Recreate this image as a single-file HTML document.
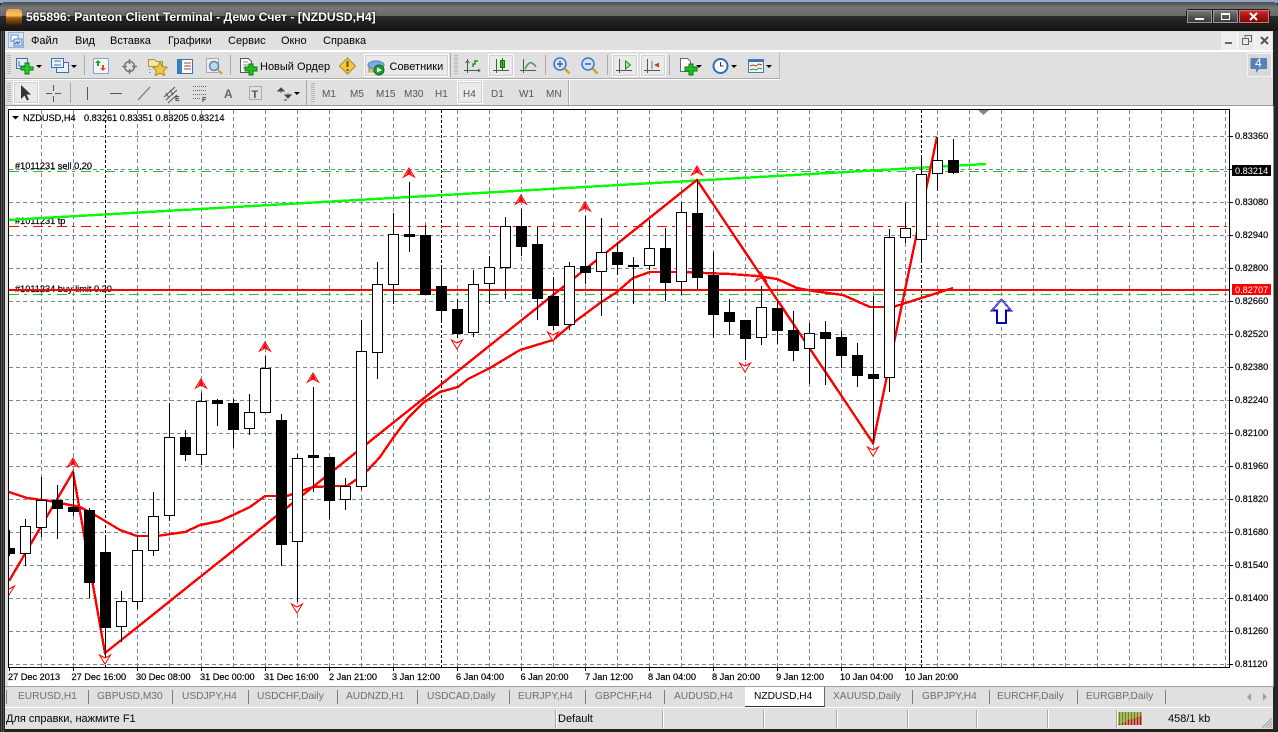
<!DOCTYPE html>
<html><head><meta charset="utf-8"><title>Panteon Client Terminal</title>
<style>
html,body{margin:0;padding:0;width:1278px;height:732px;overflow:hidden;background:#222}
body{position:relative;font-family:"Liberation Sans","Noto Sans CJK SC",sans-serif;font-size:11px;color:#000}
.a{position:absolute}
.t{position:absolute;white-space:nowrap;line-height:13px}
.sep{position:absolute;width:1px;background:#a8a8a8}
.pr{position:absolute;background:#f4f4f4;border:1px solid #fff;box-shadow:inset 0 0 0 1px #d0d0d0;box-sizing:border-box;background-image:radial-gradient(#ccc 0.6px,transparent 0.7px);background-size:2px 2px}
.tab{position:absolute;top:690px;color:#6e6e6e;font-size:10.2px;line-height:13px;white-space:nowrap}
.ts{position:absolute;top:690px;height:14px;width:1px;background:#808078}
.ss{position:absolute;top:710px;height:18px;width:1px;background:#fff;border-left:1px solid #a8a8a8}
.tf{position:absolute;top:89px;color:#555;font-size:10px;line-height:12px;white-space:nowrap}
svg{position:absolute;overflow:visible}
</style></head><body>
<!-- desktop strip & title bar -->
<div class="a" style="left:0;top:0;width:1278px;height:3px;background:#8ea9cc"></div>
<div class="a" style="left:0;top:2px;width:1278px;height:14px;border-radius:5px 5px 0 0;background:linear-gradient(#4b4b4b,#767676 40%,#6a6a6a)"></div>
<div class="a" style="left:0;top:16px;width:1278px;height:716px;background:#222"></div>
<div class="a" style="left:0;top:16px;width:1278px;height:15px;background:linear-gradient(#2c2c2c,#141414)"></div>
<div class="a" style="left:0;top:31px;width:5px;height:701px;background:repeating-linear-gradient(90deg,#222 0,#222 1px,#555 1px,#555 2px)"></div>
<div class="a" style="left:1273px;top:31px;width:5px;height:701px;background:#262626"></div>
<div class="a" style="left:6px;top:9px;width:16px;height:16px;border-radius:4px;background:linear-gradient(#f6a23c,#f7c46b 40%,#a85c10 55%,#3a2208)"></div>
<div class="t" style="left:26px;top:11px;color:#fff;font-weight:bold;font-size:12.2px;text-shadow:0 0 2px #000">565896: Panteon Client Terminal - Демо Счет - [NZDUSD,H4]</div>
<!-- window buttons -->
<div class="a" style="left:1186px;top:9px;width:84px;height:15px;background:#1a1a1a;border-radius:3px"></div>
<div class="a" style="left:1187px;top:10px;width:25px;height:13px;background:linear-gradient(#777,#555 50%,#3a3a3a);border:1px solid #999;box-sizing:border-box"></div>
<div class="a" style="left:1213px;top:10px;width:25px;height:13px;background:linear-gradient(#777,#555 50%,#3a3a3a);border:1px solid #999;box-sizing:border-box"></div>
<div class="a" style="left:1239px;top:10px;width:30px;height:13px;background:linear-gradient(#c9302a,#a81410 50%,#7c0c08);border:1px solid #c77;box-sizing:border-box"></div>
<div class="a" style="left:1195px;top:18px;width:9px;height:2px;background:#fff"></div>
<div class="a" style="left:1221px;top:13px;width:9px;height:7px;border:1px solid #fff;border-top-width:2px;box-sizing:border-box"></div>
<svg style="left:1249px;top:12px" width="10" height="9"><path d="M1 1L8 8M8 1L1 8" stroke="#fff" stroke-width="2"/></svg>
<!-- client -->
<div class="a" style="left:5px;top:31px;width:1268px;height:698px;background:#e0e0e0"></div>
<!-- menu -->
<svg style="left:8px;top:32px" width="16" height="16"><rect x="0.5" y="0.5" width="15" height="15" fill="#dce8f6" stroke="#8fb0d8"/><rect x="3" y="3" width="7" height="6" fill="#fff" stroke="#5a8ac6"/><rect x="6" y="7" width="8" height="7" fill="#cfe0f4" stroke="#5a8ac6"/><path d="M7 12l2-2 1 2 2-3" stroke="#3a6aa6" fill="none"/></svg>
<div class="t" style="left:31px;top:35px">Файл</div>
<div class="t" style="left:75px;top:35px">Вид</div>
<div class="t" style="left:110px;top:35px">Вставка</div>
<div class="t" style="left:168px;top:35px">Графики</div>
<div class="t" style="left:228px;top:35px">Сервис</div>
<div class="t" style="left:281px;top:35px">Окно</div>
<div class="t" style="left:323px;top:35px">Справка</div>
<div class="a" style="left:1221px;top:32px;width:16px;height:18px;background:#eee;border-right:1px solid #fff"></div>
<div class="a" style="left:1238px;top:32px;width:16px;height:18px;background:#e8e8e8;border-right:1px solid #fff"></div>
<div class="a" style="left:1255px;top:32px;width:17px;height:18px;background:#eee"></div>
<div class="a" style="left:1225px;top:42px;width:7px;height:2px;background:#666"></div>
<svg style="left:1242px;top:35px" width="10" height="10"><path d="M3 2.5V.5H9.500V6.500H7M.5 3.500H6.500V9.500H.5Z" fill="none" stroke="#666"/></svg>
<svg style="left:1260px;top:36px" width="9" height="9"><path d="M1 1L8 8M8 1L1 8" stroke="#555" stroke-width="2"/></svg>
<div class="a" style="left:5px;top:50px;width:1268px;height:2px;background:#fff"></div>
<div class="a" style="left:5px;top:78px;width:775px;height:1px;background:#aaa"></div>
<div class="a" style="left:779px;top:52px;width:1px;height:27px;background:#bbb"></div>
<div class="a" style="left:5px;top:79px;width:775px;height:1px;background:#fff"></div>
<div class="a" style="left:5px;top:105px;width:1268px;height:1px;background:#9a9a9a"></div>
<div class="a" style="left:568px;top:80px;width:1px;height:25px;background:#a8a8a8"></div>
<div class="a" style="left:569px;top:80px;width:1px;height:25px;background:#fff"></div>
<!-- grips -->
<div class="a" style="left:7px;top:55px;width:4px;height:20px;background:repeating-linear-gradient(#b8b8b8 0,#b8b8b8 1px,#e0e0e0 1px,#e0e0e0 2px)"></div>
<div class="a" style="left:7px;top:83px;width:4px;height:19px;background:repeating-linear-gradient(#b8b8b8 0,#b8b8b8 1px,#e0e0e0 1px,#e0e0e0 2px)"></div>
<div class="a" style="left:454px;top:55px;width:4px;height:20px;background:repeating-linear-gradient(#b8b8b8 0,#b8b8b8 1px,#e0e0e0 1px,#e0e0e0 2px)"></div>
<div class="a" style="left:311px;top:83px;width:4px;height:19px;background:repeating-linear-gradient(#b8b8b8 0,#b8b8b8 1px,#e0e0e0 1px,#e0e0e0 2px)"></div>
<div class="sep" style="left:306px;top:80px;height:25px"></div>
<div class="sep" style="left:450px;top:53px;height:24px"></div>
<!-- toolbar 1 -->
<div class="sep" style="left:84px;top:55px;height:20px"></div>
<div class="sep" style="left:230px;top:55px;height:20px"></div>
<div class="sep" style="left:545px;top:55px;height:20px"></div>
<div class="sep" style="left:607px;top:55px;height:20px"></div>
<div class="sep" style="left:669px;top:55px;height:20px"></div>
<div class="pr" style="left:364px;top:54px;width:85px;height:23px"></div>
<div class="pr" style="left:488px;top:54px;width:26px;height:23px"></div>
<div class="pr" style="left:612px;top:54px;width:26px;height:23px"></div>
<div class="pr" style="left:640px;top:54px;width:26px;height:23px"></div>
<svg style="left:0;top:0" width="1278" height="106">
<!-- new chart -->
<rect x="16.500" y="58.500" width="11" height="10" fill="#e8f0fa" stroke="#3a70b0"/><path d="M19 61v5h6" stroke="#3a70b0" fill="none"/><path d="M25 63h4v4h4v3h-4v4h-4v-4h-4v-3h4z" fill="#2bd02b" stroke="#0a7a0a"/>
<path d="M36 65h6l-3 3z" fill="#000"/>
<!-- profiles -->
<g fill="#e8f0fa" stroke="#3a70b0"><rect x="56.500" y="62.500" width="12" height="10"/><rect x="51.500" y="58.500" width="12" height="9"/></g><path d="M54 61h7M54 65h7" stroke="#4a7ab0"/>
<path d="M71 65h6l-3 3z" fill="#000"/>
<!-- market watch -->
<rect x="93.500" y="58.500" width="15" height="15" rx="1" fill="#f4f6fa" stroke="#7fa4d0"/><path d="M98 60l3 3h-2v3h-2v-3h-2z" fill="#22a022"/><path d="M103 71l-3-3h2v-3h2v3h2z" fill="#e05020"/>
<!-- crosshair -->
<g fill="none" stroke="#777" stroke-width="1.500"><circle cx="129.500" cy="66.500" r="5"/><path d="M129.500 59v5M129.500 69v5M122 66.500h5M132 66.500h5"/></g>
<!-- folder star -->
<path d="M148.500 59.500h6l2 2h6v5h-14z" fill="#f6e6a6" stroke="#a8904a"/><path d="M160 62l2.200 4.500 5 .7-3.600 3.500.9 4.800-4.500-2.300-4.500 2.300.9-4.800-3.600-3.500 5-.7z" fill="#f5c93c" stroke="#a88a2a"/><path d="M150 69v1M150 72v1" stroke="#555"/>
<!-- list -->
<rect x="177.500" y="59.500" width="15" height="14" fill="#fff" stroke="#3a70b4"/><rect x="178" y="60" width="4" height="13" fill="#3a80c4"/><path d="M184 63h7M184 66h7M184 69h7" stroke="#a04040"/>
<!-- magnifier -->
<rect x="206.500" y="58.500" width="12" height="14" fill="#eee" stroke="#aaa"/><circle cx="214" cy="66" r="4.500" fill="#c0d8f0" stroke="#5a86b4" stroke-width="1.500"/><path d="M218 70l4 4" stroke="#c8a030" stroke-width="2"/>
<!-- new order -->
<path d="M240.500 58.500h8l3 3v11h-11z" fill="#fff" stroke="#555"/><path d="M243 62h5M243 65h6M243 68h4" stroke="#888"/><path d="M249 64h4v3h4v4h-4v4h-4v-4h-4v-4h4z" fill="#22c022" stroke="#0a7a0a"/>
<!-- alert diamond -->
<path d="M347.500 58l8 8-8 8-8-8z" fill="#f6c93c" stroke="#a88a2a"/><path d="M347.500 61v6M347.500 69v2" stroke="#7a4a00" stroke-width="2"/>
<!-- advisors -->
<ellipse cx="376" cy="65" rx="8" ry="4" fill="#7ab0e0" stroke="#4a80b0"/><path d="M369 68q7 6 14 0v4h-14z" fill="#f2d890" stroke="#a89050"/><circle cx="379" cy="70" r="5" fill="#18a030" stroke="#0a6a1a"/><path d="M377 67.500l5 2.500-5 2.500z" fill="#fff"/>
<!-- chart modes -->
<g fill="none" stroke="#555"><path d="M467.500 59v14M464 70.500h16M467 61l-1.500 2M468 61l1.500 2M478 69l2 1.500-2 1.500"/><path d="M496.500 59v14M493 70.500h16"/><path d="M523.500 59v14M520 70.500h16"/><path d="M619.500 59v14M616 70.500h16"/><path d="M647.500 59v14M644 70.500h16"/></g>
<path d="M473 67v-3h2v-3h3" fill="none" stroke="#1a9a1a" stroke-width="1.500"/>
<rect x="500.500" y="60.500" width="4" height="7" fill="#28d028" stroke="#0a7a0a"/><path d="M502.500 58v12" stroke="#0a7a0a"/>
<path d="M525 69q4-8 7-6t4 4" fill="none" stroke="#4a9a4a" stroke-width="1.500"/>
<path d="M625.500 61l5 4-5 4z" fill="#aaeeaa" stroke="#1a8a1a"/>
<path d="M652 61v8" stroke="#3a70b4"/><path d="M654 65l5-2.500v5z" fill="#c04020"/>
<!-- zoom in/out -->
<g><circle cx="560" cy="64" r="6" fill="#cfe4f8" stroke="#3a7ac0" stroke-width="1.500"/><path d="M557 64h6M560 61v6" stroke="#2a6ab0" stroke-width="1.500"/><path d="M564.500 68.500l5 5" stroke="#d0a030" stroke-width="2.500"/></g>
<g><circle cx="588" cy="64" r="6" fill="#cfe4f8" stroke="#3a7ac0" stroke-width="1.500"/><path d="M585 64h6" stroke="#2a6ab0" stroke-width="1.500"/><path d="M592.500 68.500l5 5" stroke="#d0a030" stroke-width="2.500"/></g>
<!-- templates -->
<path d="M680.500 58.500h7l3 3v10h-10z" fill="#fff" stroke="#666"/><path d="M689 64h4v3h4v4h-4v4h-4v-4h-4v-4h4z" fill="#22c022" stroke="#0a7a0a"/>
<path d="M696 65h6l-3 3z" fill="#000"/>
<circle cx="720.500" cy="66" r="7" fill="#fff" stroke="#2a70c0" stroke-width="2"/><path d="M720.500 62v4h3" stroke="#333" fill="none"/>
<path d="M731 65h6l-3 3z" fill="#000"/>
<rect x="748.500" y="59.500" width="15" height="13" fill="#f4f4f4" stroke="#4a7ab0"/><rect x="749" y="60" width="14" height="2" fill="#3a70b4"/><path d="M750 66l3-1 3 1 3-2 3 1" stroke="#a04020" fill="none"/><path d="M750 70l3-1 3 1 3-2 3 1" stroke="#2a9a2a" fill="none"/>
<path d="M766 65h6l-3 3z" fill="#000"/>
</svg>
<div class="t" style="left:260px;top:61px">Новый Ордер</div>
<div class="t" style="left:389.500px;top:61px">Советники</div>
<!-- notification -->
<div class="a" style="left:1247px;top:53px;width:25px;height:24px;background:#d8d8d8;border:1px solid #f4f4f4;box-sizing:border-box"></div>
<svg style="left:1250px;top:57px" width="20" height="18"><path d="M1.500 1h14.500q1 0 1 1v9q0 1-1 1h-7l-3 4v-4h-4.500q-1 0-1-1v-9q0-1 1-1z" fill="#5a7fb8"/></svg>
<div class="t" style="left:1255px;top:57px;color:#fff;font-size:12px">4</div>
<!-- toolbar 2 -->
<div class="pr" style="left:13px;top:81px;width:26px;height:23px"></div>
<div class="pr" style="left:457px;top:81px;width:26px;height:23px"></div>
<div class="sep" style="left:70px;top:82px;height:21px"></div>
<svg style="left:0;top:0" width="1278" height="106">
<path d="M21 85v14l3.500-3.500 2.500 5 2-1-2.500-5h4.500z" fill="#333"/>
<path d="M53.500 85v6M53.500 96v6M46 93.500h6M55 93.500h6" stroke="#555" fill="none"/>
<path d="M87.500 87v13M110 93.500h12" stroke="#555" fill="none"/>
<path d="M138 100l12-13" stroke="#777" fill="none" stroke-width="1.200"/>
<path d="M164 97l11-10M166 100l11-10M168 103l9-8M166 93l3 5M170 90l3 5" stroke="#555" fill="none"/>
<text x="175" y="101" font-size="7" font-weight="bold" fill="#444" font-family="Liberation Sans">E</text>
<path d="M193 86.500h14M193 90.500h14M193 94.500h14M193 98.500h8" stroke="#666" stroke-dasharray="1 1" fill="none"/>
<text x="202" y="102" font-size="7" font-weight="bold" fill="#444" font-family="Liberation Sans">F</text>
<text x="224" y="98" font-size="12" font-weight="bold" fill="#666" font-family="Liberation Sans">A</text>
<rect x="249.500" y="86.500" width="12" height="13" fill="none" stroke="#777" stroke-dasharray="1 1"/>
<text x="251.500" y="98" font-size="11" font-weight="bold" fill="#555" font-family="Liberation Sans">T</text>
<path d="M281 88l-3 3h6zM281 92v1M288 98l3-3h-6zM288 93v1M284 100h3" stroke="#444" fill="#444"/>
<path d="M294 92h6l-3 3z" fill="#000"/>
</svg>
<div class="tf" style="left:322px">M1</div>
<div class="tf" style="left:350px">M5</div>
<div class="tf" style="left:376px">M15</div>
<div class="tf" style="left:404px">M30</div>
<div class="tf" style="left:435px">H1</div>
<div class="tf" style="left:463px">H4</div>
<div class="tf" style="left:491px">D1</div>
<div class="tf" style="left:519px">W1</div>
<div class="tf" style="left:546px">MN</div>
<!-- chart window -->
<div class="a" style="left:8px;top:106px;width:1265px;height:581px;background:#fff"></div>
<div class="a" style="left:1273px;top:106px;width:1px;height:581px;background:#8a8a8a"></div>
<svg style="left:0;top:0" width="1278" height="732" font-family="Liberation Sans" font-size="9.200" stroke-linejoin="miter">
<defs><clipPath id="c"><rect x="8" y="109" width="1222" height="559"/></clipPath></defs>
<g clip-path="url(#c)" shape-rendering="crispEdges">
<!-- grid -->
<path fill="none" stroke="#778899" stroke-dasharray="4 3" d="M9 136.500H1229M9 169.500H1229M9 202.500H1229M9 235.500H1229M9 268.500H1229M9 301.500H1229M9 334.500H1229M9 367.500H1229M9 400.500H1229M9 433.500H1229M9 466.500H1229M9 499.500H1229M9 532.500H1229M9 565.500H1229M9 598.500H1229M9 631.500H1229M9 664.500H1229"/>
<path fill="none" stroke="#778899" stroke-dasharray="4 3" d="M41.500 110V667M73.500 110V667M137.500 110V667M169.500 110V667M201.500 110V667M233.500 110V667M265.500 110V667M297.500 110V667M329.500 110V667M361.500 110V667M393.500 110V667M425.500 110V667M457.500 110V667M489.500 110V667M521.500 110V667M553.500 110V667M585.500 110V667M617.500 110V667M649.500 110V667M681.500 110V667M713.500 110V667M745.500 110V667M777.500 110V667M809.500 110V667M841.500 110V667M873.500 110V667M905.500 110V667M937.500 110V667M969.500 110V667M1001.500 110V667M1033.500 110V667M1065.500 110V667M1097.500 110V667M1129.500 110V667M1161.500 110V667M1193.500 110V667M1225.500 110V667"/>
<path fill="none" stroke="#000" stroke-dasharray="3 2" d="M105.500 110V667M441.500 110V667M921.500 110V667"/>
</g>
<!-- order labels -->
<g stroke="#000" stroke-width=".2">
<text x="15" y="169" fill="#000">#1011231 sell 0.20</text>
<text x="15" y="224" fill="#000">#1011231 tp</text>
<text x="15" y="292" fill="#000">#1011234 buy limit 0.20</text>
<text x="23" y="121" fill="#000">NZDUSD,H4</text>
<text x="84" y="121" fill="#000">0.83261 0.83351 0.83205 0.83214</text>
</g>
<path d="M12 116h7l-3.500 3.500z" fill="#000"/>
<g clip-path="url(#c)" shape-rendering="crispEdges" fill="none">
<path stroke="#22c322" stroke-dasharray="10 5 3 6" d="M9 171.500H1229"/>
<path stroke="#22c322" stroke-dasharray="10 5 3 6" d="M9 294.500H1229"/>
<path stroke="#ff0000" stroke-dasharray="10 5 3 6" d="M9 226.500H1229"/>
<path stroke="#ff0000" stroke-width="2" d="M9 290H1229"/>
<path stroke="#00ff00" stroke-width="2.400" d="M8 220L986 164"/>
<path stroke="#ff0000" stroke-width="2.400" d="M9 581L73 472L105 653L697 180L873 443L937 137"/>
<path stroke="#ff0000" stroke-width="2.400" d="M9 492L27 498L50 501L80 507L95 515L120 530L137 536L157 536L185 532L200 525L220 521L233 515L250 507L265 496L287 496L313 487L335 486L347 486L357 479L368 470L380 457L393 438L408 418L423 403L440 392L458 387L468 379L490 368L520 350L553 340L573 323L600 303L617 292L633 278L650 272L680 272L730 274L757 276L777 279L797 288L813 291L843 295L870 307L893 307L953 288"/>
<!-- wicks -->
<path stroke="#000" d="M9.500 530V556M25.500 519V566M41.500 477V537M57.500 485V539M73.500 472V516M89.500 508V598M105.500 535V655M121.500 591V642M137.500 535V609M153.500 492V556M169.500 403V521M185.500 430V461M201.500 393V465M217.500 399V426M233.500 399V448M249.500 394V435M265.500 356V412M281.500 414V566M297.500 454V602M313.500 387V492M329.500 457V519M345.500 478V510M361.500 320V490M377.500 262V379M393.500 213V304M409.500 182V252M425.500 225V295M441.500 265V322M457.500 299V338M473.500 270V337M489.500 256V304M505.500 217V299M521.500 209V256M537.500 227V320M553.500 277V330M569.500 262V330M585.500 216V284M601.500 218V316M617.500 242V275M633.500 257V304M649.500 220V270M665.500 228V301M681.500 202V295M697.500 180V289M713.500 252V338M729.500 299V335M745.500 320V360M761.500 286V345M777.500 302V344M793.500 311V361M809.500 323V384M825.500 321V385M841.500 331V368M857.500 343V387M873.500 296V443M889.500 229V392M905.500 203V243M921.500 158V262M937.500 137V191M953.500 139V174"/>
<!-- white bodies -->
<path fill="#fff" stroke="#000" d="M20.500 526.500h10v27h-10zM36.500 500.500h10v27h-10zM116.500 601.500h10v25h-10zM132.500 550.500h10v51h-10zM148.500 516.500h10v34h-10zM164.500 437.500h10v78h-10zM196.500 401.500h10v53h-10zM244.500 412.500h10v16h-10zM260.500 368.500h10v44h-10zM292.500 458.500h10v83h-10zM340.500 486.500h10v13h-10zM356.500 351.500h10v135h-10zM372.500 284.500h10v68h-10zM388.500 234.500h10v50h-10zM468.500 284.500h10v48h-10zM484.500 267.500h10v16h-10zM500.500 226.500h10v41h-10zM564.500 266.500h10v58h-10zM596.500 252.500h10v19h-10zM644.500 248.500h10v17h-10zM676.500 212.500h10v69h-10zM756.500 307.500h10v30h-10zM804.500 333.500h10v15h-10zM884.500 237.500h10v140h-10zM900.500 228.500h10v9h-10zM916.500 174.500h10v65h-10zM932.500 160.500h10v13h-10z"/>
<!-- black bodies -->
<path fill="#000" stroke="#000" d="M4.500 548.500h10v5h-10zM52.500 500.500h10v8h-10zM68.500 507.500h10v4h-10zM84.500 510.500h10v72h-10zM100.500 552.500h10v75h-10zM180.500 437.500h10v17h-10zM212.500 400.500h10v3h-10zM228.500 403.500h10v26h-10zM276.500 420.500h10v124h-10zM308.500 455.500h10v2h-10zM324.500 457.500h10v43h-10zM404.500 234.500h10v2h-10zM420.500 235.500h10v59h-10zM436.500 286.500h10v24h-10zM452.500 309.500h10v24h-10zM516.500 226.500h10v20h-10zM532.500 244.500h10v54h-10zM548.500 296.500h10v29h-10zM580.500 266.500h10v6h-10zM612.500 252.500h10v12h-10zM628.500 265.500h10v1h-10zM660.500 248.500h10v34h-10zM692.500 213.500h10v64h-10zM708.500 275.500h10v39h-10zM724.500 312.500h10v9h-10zM740.500 320.500h10v18h-10zM772.500 308.500h10v22h-10zM788.500 330.500h10v20h-10zM820.500 332.500h10v6h-10zM836.500 337.500h10v18h-10zM852.500 355.500h10v20h-10zM868.500 374.500h10v4h-10zM948.500 160.500h10v12h-10z"/>
</g>
<!-- fractal arrows -->
<g clip-path="url(#c)" fill="#fff" stroke="#ff0000">
<path d="M73 458l5.500 9-5.500-3-5.500 3z"/><path d="M73 460l-2 4h4z" fill="#f00"/>
<path d="M201 379l5.500 9-5.500-3-5.500 3z"/><path d="M201 381l-2 4h4z" fill="#f00"/>
<path d="M265 342l5.500 9-5.500-3-5.500 3z"/><path d="M265 344l-2 4h4z" fill="#f00"/>
<path d="M313 373l5.500 9-5.500-3-5.500 3z"/><path d="M313 375l-2 4h4z" fill="#f00"/>
<path d="M409 168l5.500 9-5.500-3-5.500 3z"/><path d="M409 170l-2 4h4z" fill="#f00"/>
<path d="M521 195l5.500 9-5.500-3-5.500 3z"/><path d="M521 197l-2 4h4z" fill="#f00"/>
<path d="M585 202l5.500 9-5.500-3-5.500 3z"/><path d="M585 204l-2 4h4z" fill="#f00"/>
<path d="M697 166l5.500 9-5.500-3-5.500 3z"/><path d="M697 168l-2 4h4z" fill="#f00"/>
<path d="M761 272l5.500 9-5.500-3-5.500 3z" fill="none"/>
<path d="M9 595l5.500-9-5.500 3-5.500-3z"/>
<path d="M105 664l5.500-9-5.500 3-5.500-3z"/>
<path d="M297 613l5.500-9-5.500 3-5.500-3z"/>
<path d="M457 349l5.500-9-5.500 3-5.500-3z"/>
<path d="M553 341l5.500-9-5.500 3-5.500-3z"/>
<path d="M745 372l5.500-9-5.500 3-5.500-3z"/>
<path d="M873 456l5.500-9-5.500 3-5.500-3z"/>
</g>
<!-- blue arrow -->
<path d="M1001.500 299.500L1011 310.500H1006V323H997V310.500H992z" fill="#fff" stroke="#0000c8" stroke-width="2" shape-rendering="crispEdges"/>
<path d="M1001.500 299.500L1011 310.500M1001.500 299.500L992 310.500" stroke="#8080e0" fill="none"/>
<!-- frame -->
<path d="M978 110h11l-5.500 5z" fill="#778899"/>
<rect x="8.500" y="109.500" width="1221" height="558" fill="none" stroke="#000" shape-rendering="crispEdges"/>
<!-- ticks -->
<path stroke="#000" shape-rendering="crispEdges" d="M1230 136.500h3M1230 169.500h3M1230 202.500h3M1230 235.500h3M1230 268.500h3M1230 301.500h3M1230 334.500h3M1230 367.500h3M1230 400.500h3M1230 433.500h3M1230 466.500h3M1230 499.500h3M1230 532.500h3M1230 565.500h3M1230 598.500h3M1230 631.500h3M1230 664.500h3M9.500 668v3M73.500 668v3M137.500 668v3M201.500 668v3M265.500 668v3M329.500 668v3M393.500 668v3M457.500 668v3M521.500 668v3M585.500 668v3M649.500 668v3M713.500 668v3M777.500 668v3M841.500 668v3M905.500 668v3"/>
<g fill="#000" stroke="#000" stroke-width=".2">
<text x="1235" y="139">0.83360</text><text x="1235" y="205">0.83080</text><text x="1235" y="238">0.82940</text><text x="1235" y="271">0.82800</text><text x="1235" y="304">0.82660</text><text x="1235" y="337">0.82520</text><text x="1235" y="370">0.82380</text><text x="1235" y="403">0.82240</text><text x="1235" y="436">0.82100</text><text x="1235" y="469">0.81960</text><text x="1235" y="502">0.81820</text><text x="1235" y="535">0.81680</text><text x="1235" y="568">0.81540</text><text x="1235" y="601">0.81400</text><text x="1235" y="634">0.81260</text><text x="1235" y="667">0.81120</text>
<text x="8" y="680">27 Dec 2013</text><text x="71.500" y="680">27 Dec 16:00</text><text x="136" y="680">30 Dec 08:00</text><text x="200" y="680">31 Dec 00:00</text><text x="264" y="680">31 Dec 16:00</text><text x="329" y="680">2 Jan 21:00</text><text x="392" y="680">3 Jan 12:00</text><text x="456" y="680">6 Jan 04:00</text><text x="520.500" y="680">6 Jan 20:00</text><text x="585" y="680">7 Jan 12:00</text><text x="648" y="680">8 Jan 04:00</text><text x="712" y="680">8 Jan 20:00</text><text x="776" y="680">9 Jan 12:00</text><text x="840" y="680">10 Jan 04:00</text><text x="905" y="680">10 Jan 20:00</text>
</g>
<rect x="1232" y="165" width="39" height="11" fill="#000"/><text x="1235" y="174" fill="#fff">0.83214</text>
<rect x="1232" y="284" width="39" height="11" fill="#f00"/><text x="1235" y="293" fill="#fff">0.82707</text>
</svg>
<!-- tabs -->
<div class="a" style="left:5px;top:686px;width:1268px;height:1px;background:#a0a0a0"></div>
<div class="a" style="left:5px;top:687px;width:1268px;height:20px;background:#e0e0e0"></div>
<div class="a" style="left:745px;top:687px;width:79px;height:19px;background:#fff;border-bottom:2px solid #333;border-right:1px solid #666;box-sizing:content-box"></div>
<div class="ts" style="left:6px"></div>
<div class="ts" style="left:88px"></div><div class="ts" style="left:172px"></div><div class="ts" style="left:248px"></div><div class="ts" style="left:337px"></div><div class="ts" style="left:417px"></div><div class="ts" style="left:509px"></div><div class="ts" style="left:585px"></div><div class="ts" style="left:664px"></div><div class="ts" style="left:912px"></div><div class="ts" style="left:989px"></div><div class="ts" style="left:1077px"></div><div class="ts" style="left:1165px"></div>
<div class="tab" style="left:18px">EURUSD,H1</div>
<div class="tab" style="left:97px">GBPUSD,M30</div>
<div class="tab" style="left:182px">USDJPY,H4</div>
<div class="tab" style="left:257px">USDCHF,Daily</div>
<div class="tab" style="left:346px">AUDNZD,H1</div>
<div class="tab" style="left:427px">USDCAD,Daily</div>
<div class="tab" style="left:518px">EURJPY,H4</div>
<div class="tab" style="left:595px">GBPCHF,H4</div>
<div class="tab" style="left:674px">AUDUSD,H4</div>
<div class="tab" style="left:754px;color:#000">NZDUSD,H4</div>
<div class="tab" style="left:833px">XAUUSD,Daily</div>
<div class="tab" style="left:922px">GBPJPY,H4</div>
<div class="tab" style="left:997px">EURCHF,Daily</div>
<div class="tab" style="left:1086px">EURGBP,Daily</div>
<svg style="left:1245px;top:692px" width="24" height="10"><path d="M6 1L2 5l4 4zM18 1l4 4-4 4z" fill="#a0a0a0"/></svg>
<!-- status -->
<div class="a" style="left:5px;top:707px;width:1268px;height:1px;background:#fff"></div>
<div class="a" style="left:5px;top:708px;width:1268px;height:21px;background:#e0e0e0"></div>
<div class="t" style="left:6px;top:713px">Для справки, нажмите F1</div>
<div class="t" style="left:558px;top:713px">Default</div>
<div class="ss" style="left:555px"></div><div class="ss" style="left:662px"></div><div class="ss" style="left:763px"></div><div class="ss" style="left:836px"></div><div class="ss" style="left:907px"></div><div class="ss" style="left:976px"></div><div class="ss" style="left:1047px"></div><div class="ss" style="left:1116px"></div>
<svg style="left:1118px;top:711px" width="24" height="16" shape-rendering="crispEdges"><path d="M1.500 1V14M4.500 1V14M7.500 1V14M10.500 1V14M13.500 1V14M16.500 1V14M19.500 1V14M22.500 1V14" stroke="#6e8c00" stroke-width="2"/><path d="M1.500 14V13M4.500 14V12M7.500 14V11M10.500 14V9M13.500 14V8M16.500 14V7M19.500 14V6M22.500 14V5" stroke="#a82000" stroke-width="2"/></svg>
<div class="t" style="left:1168px;top:713px">458/1 kb</div>
<svg style="left:1261px;top:717px" width="12" height="12"><path d="M11 1L1 11M11 4L4 11M11 7L7 11M11 10L10 11" stroke="#a0a0a0"/></svg>
</body></html>
